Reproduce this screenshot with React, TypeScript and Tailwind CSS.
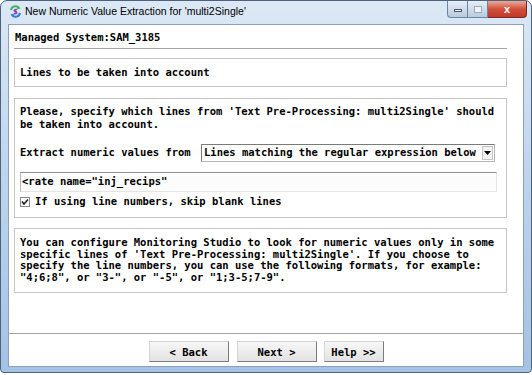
import React from "react";

function TitleIcon() {
  return (
    <svg width="13" height="13" viewBox="0 0 13 13">
      <path d="M2 5 A4.5 4.5 0 0 1 10 3" stroke="#3fb34f" strokeWidth="2" fill="none" />
      <path d="M9 1 L11.5 3.5 L8 4.5 Z" fill="#3fb34f" />
      <path d="M11 8 A4.5 4.5 0 0 1 3 10" stroke="#2f7fd6" strokeWidth="2" fill="none" />
      <path d="M4 12 L1.5 9.5 L5 8.5 Z" fill="#2f7fd6" />
      <path d="M8 4.5 C5 4.2 4.5 6.2 6.5 6.6 C8.5 7 8 9 5 8.6" stroke="#8a3fc4" strokeWidth="1.6" fill="none" />
    </svg>
  );
}

function Btn({ label, w }: { label: string; w: string }) {
  return (
    <div
      className={`${w} h-[21px] flex items-center justify-center border border-t-[#d4d4d4] border-l-[#d4d4d4] border-r-[#7c7c7c] border-b-[#7c7c7c] bg-gradient-to-b from-[#f7f7f7] to-[#e2e2e2] text-[10.5px] font-bold text-black`}
    >
      <span className="relative top-[1px]">{label}</span>
    </div>
  );
}

export default function App() {
  return (
    <div className="w-[532px] h-[375px] bg-white overflow-hidden font-['DejaVu_Sans_Mono',monospace]">
      <div className="w-[532px] h-[373px] rounded-t-[7px] rounded-b-[4px] border border-[#4d627c] bg-gradient-to-b from-[#dce8f5] via-[#bcd3ec] to-[#a4c2e4] flex flex-col px-[7px] pb-[5px]">
        {/* Title bar */}
        <div className="h-[23px] -mr-[3px] flex items-start">
          <div className="flex items-center h-[21px] pl-[1px]">
            <TitleIcon />
            <span className="ml-[3px] text-[10.5px] text-black font-['Liberation_Sans',Arial,sans-serif]">
              New Numeric Value Extraction for 'multi2Single'
            </span>
          </div>
          <div className="ml-auto flex h-[17px]">
            <div className="w-[21px] h-[17px] rounded-bl-[4px] border border-t-0 border-[#6f849e] bg-gradient-to-b from-[#e6eef7] to-[#b8cbe0] flex items-center justify-center">
              <div className="w-[8px] h-[3px] bg-white border border-[#44566d] mt-[3px]" />
            </div>
            <div className="w-[20px] h-[17px] border border-t-0 border-l-0 border-[#6f849e] bg-gradient-to-b from-[#e6eef7] to-[#b8cbe0] flex items-center justify-center">
              <div className="w-[8px] h-[7px] border border-[#9aabbf] bg-[#eef3f8]" />
            </div>
            <div className="w-[39px] h-[17px] rounded-br-[4px] border border-t-0 border-l-0 border-[#7a2a22] bg-gradient-to-b from-[#e9a99a] via-[#d0503a] to-[#c2382a] flex items-center justify-center">
              <span className="text-white font-bold text-[11px] leading-none font-['Liberation_Sans',Arial,sans-serif]">x</span>
            </div>
          </div>
        </div>

        {/* Client area */}
        <div className="flex-1 bg-white border border-[#8ba0bc] flex flex-col">
          <div className="flex-1 pl-[5px] pr-[16px] flex flex-col">
            <div className="h-[24px] border-b border-[#a5a5a5] pt-[6px] pl-[1px] text-[10.5px] leading-[13px] font-bold text-black">
              Managed System:SAM_3185
            </div>

            <div className="mt-[9px] h-[29px] border border-[#c6c6c6] flex items-center pl-[5px] text-[10.5px] font-bold text-black">
              Lines to be taken into account
            </div>

            <div className="mt-[11px] h-[120px] border border-[#c6c6c6] pl-[5px] pr-[8px] pt-[6px] text-[10.5px] font-bold text-black">
              <div className="leading-[12.5px]">
                Please, specify which lines from 'Text Pre-Processing: multi2Single' should
                <br />
                be taken into account.
              </div>
              <div className="mt-[14px] flex items-center h-[18px]">
                <span className="w-[181px]">Extract numeric values from</span>
                <div className="w-[294px] h-[18px] border border-t-[#7a7a7a] border-l-[#7a7a7a] border-r-[#b5b5b5] border-b-[#b5b5b5] flex items-center">
                  <span className="pl-[2px] flex-1 whitespace-nowrap">Lines matching the regular expression below</span>
                  <div className="w-[11px] h-[14px] mr-[1px] border border-[#c4c4c4] bg-[#f2f2f2] flex items-center justify-center">
                    <svg width="7" height="4" viewBox="0 0 7 4"><path d="M0 0 H7 L3.5 4 Z" fill="#000" /></svg>
                  </div>
                </div>
              </div>
              <div className="mt-[10px] h-[20px] w-[477px] border border-t-[#8e8e8e] border-l-[#b8b8b8] border-r-[#e4e4e4] border-b-[#e4e4e4] bg-[#fcfcfc] flex items-center pl-[1px]">
                <span>&lt;rate name="inj_recips"</span>
              </div>
              <div className="mt-[3px] h-[13px] flex items-center">
                <svg width="10" height="10" viewBox="0 0 10 10" className="mr-[5px]">
                  <rect x="0.5" y="0.5" width="9" height="9" fill="#fff" stroke="#8a8a8a" />
                  <path d="M2 4.5 L4 7 L8 2.5" stroke="#1a1a1a" strokeWidth="1.5" fill="none" />
                </svg>
                <span>If using line numbers, skip blank lines</span>
              </div>
            </div>

            <div className="mt-[10px] h-[65px] border border-[#c6c6c6] pl-[5px] pt-[8px] text-[10.5px] leading-[11.5px] font-bold text-black">
              You can configure Monitoring Studio to look for numeric values only in some
              <br />
              specific lines of 'Text Pre-Processing: multi2Single'. If you choose to
              <br />
              specify the line numbers, you can use the following formats, for example:
              <br />
              "4;6;8", or "3-", or "-5", or "1;3-5;7-9".
            </div>
          </div>

          <div className="h-[33px] border-t border-[#a5a5a5] pt-[7px] flex justify-center">
            <Btn label="< Back" w="w-[80px]" />
            <div className="w-[8px]" />
            <Btn label="Next >" w="w-[80px]" />
            <div className="w-[7px]" />
            <Btn label="Help >>" w="w-[60px]" />
          </div>
        </div>
      </div>
    </div>
  );
}
